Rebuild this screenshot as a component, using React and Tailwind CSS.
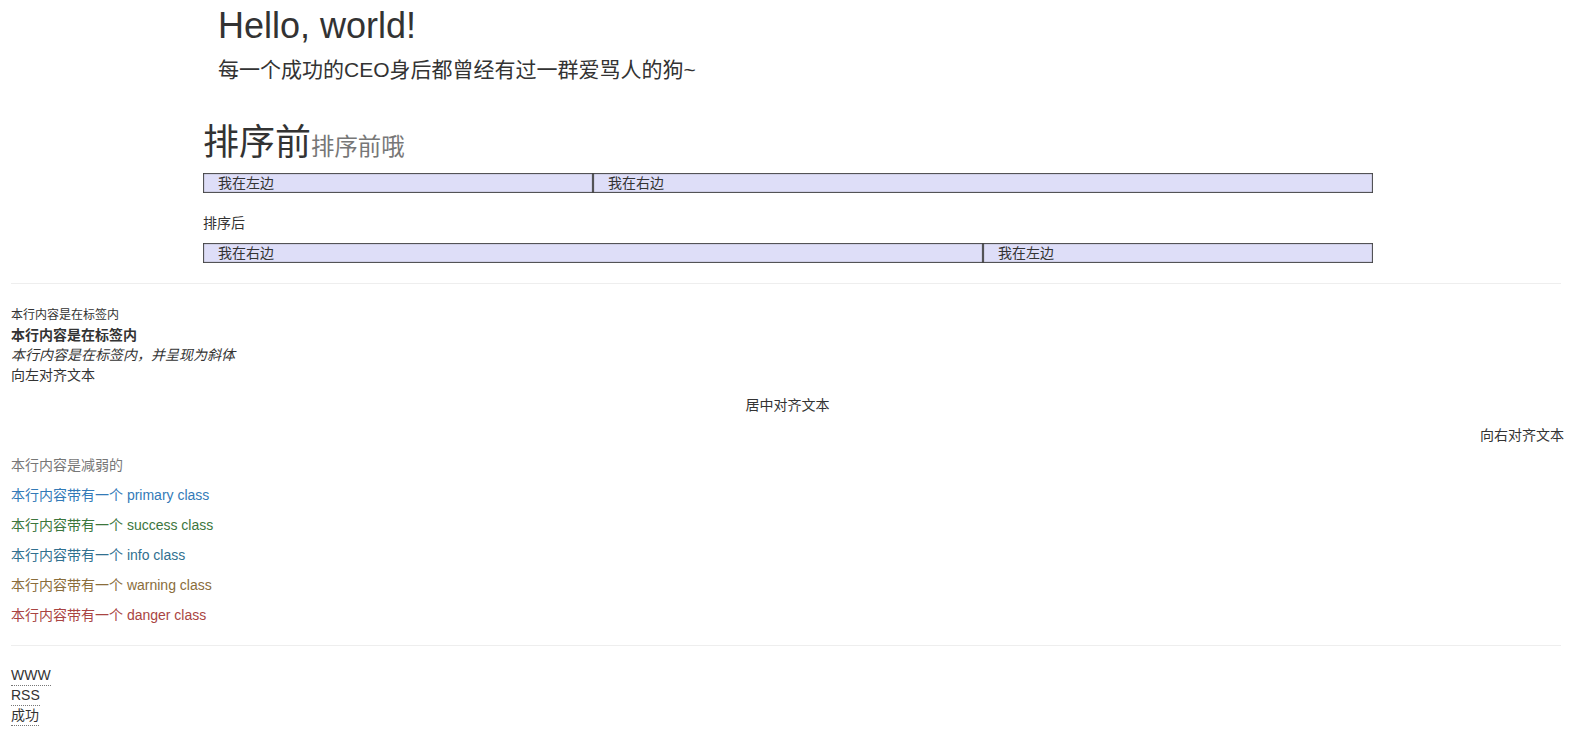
import React from 'react';

function Col({ width, children }) {
  return (
    <div
      className={`${width} px-[15px] leading-[20px] bg-[#dedef8] shadow-[inset_1px_-1px_1px_#444,inset_-1px_1px_1px_#444]`}
    >
      {children}
    </div>
  );
}

export default function App() {
  const contextual = [
    { cls: 'text-[#337ab7]', label: 'primary' },
    { cls: 'text-[#3c763d]', label: 'success' },
    { cls: 'text-[#31708f]', label: 'info' },
    { cls: 'text-[#8a6d3b]', label: 'warning' },
    { cls: 'text-[#a94442]', label: 'danger' },
  ];

  return (
    <div className="min-h-screen bg-white text-[14px] leading-[20px] text-[#333] [font-family:'Liberation_Sans','Noto_Sans_CJK_SC',sans-serif]">
      {/* Top container */}
      <div className="mx-auto w-[1174px] pl-[4px]">
        <div className="px-[15px]">
          <h1 className="pt-[6px] text-[36px] leading-[40px] font-normal">Hello, world!</h1>
          <p className="mt-[9px] text-[21px] leading-[29px]">每一个成功的CEO身后都曾经有过一群爱骂人的狗~</p>
        </div>

        <h1 className="mt-[39px] mb-[10px] text-[36px] leading-[40px] font-normal">
          排序前<small className="text-[23.4px] leading-none font-normal text-[#777]">排序前哦</small>
        </h1>
        <div className="flex">
          <Col width="w-[390px]">我在左边</Col>
          <Col width="w-[780px]">我在右边</Col>
        </div>

        <p className="mt-[20px] mb-[10px]">排序后</p>
        <div className="flex">
          <Col width="w-[780px]">我在右边</Col>
          <Col width="w-[390px]">我在左边</Col>
        </div>
      </div>

      {/* Typography section */}
      <div className="pl-[11px] pr-[8px]">
        <hr className="my-[20px] mr-[3px] border-0 border-t border-[#eee]" />

        <div>
          <small className="text-[12px]">本行内容是在标签内</small>
          <br />
          <strong className="font-bold">本行内容是在标签内</strong>
          <br />
          <em className="italic">本行内容是在标签内，并呈现为斜体</em>
        </div>
        <p className="mb-[10px] text-left">向左对齐文本</p>
        <p className="mb-[10px] text-center">居中对齐文本</p>
        <p className="mb-[10px] text-right">向右对齐文本</p>
        <p className="mb-[10px] text-[#777]">本行内容是减弱的</p>
        {contextual.map((c) => (
          <p key={c.label} className={`mb-[10px] ${c.cls}`}>
            本行内容带有一个 {c.label} class
          </p>
        ))}

        <hr className="mt-[20px] mb-[20px] mr-[3px] border-0 border-t border-[#eee]" />

        <div className="flex flex-col items-start">
          <abbr title="World Wide Web" className="no-underline border-b border-dotted border-[#777] leading-[19px] cursor-help">WWW</abbr>
          <abbr title="Real Simple Syndication" className="no-underline border-b border-dotted border-[#777] leading-[19px] cursor-help">RSS</abbr>
          <abbr title="成功" className="no-underline border-b border-dotted border-[#777] leading-[19px] cursor-help">成功</abbr>
        </div>
      </div>
    </div>
  );
}
